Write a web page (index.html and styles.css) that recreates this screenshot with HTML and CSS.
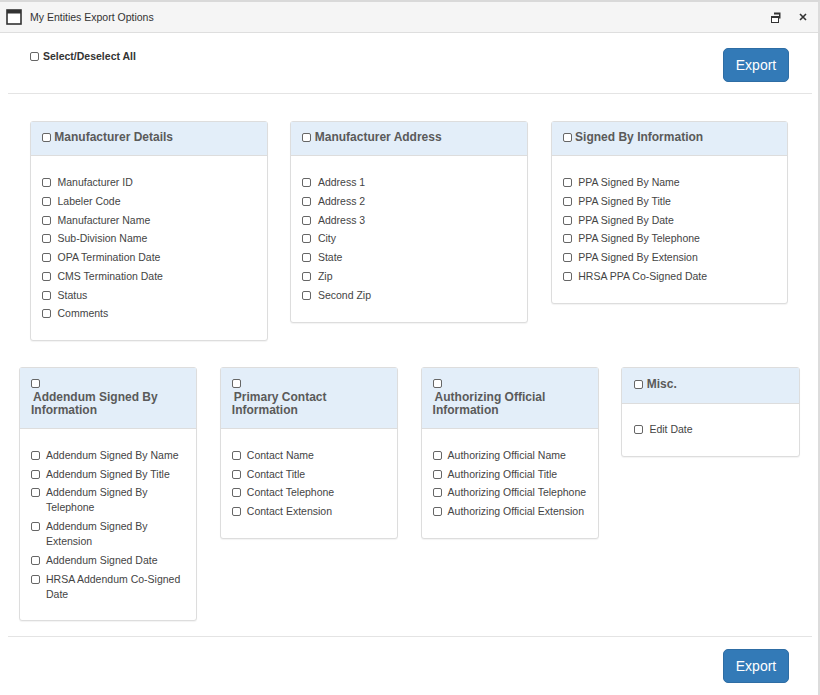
FILE: index.html
```html
<!DOCTYPE html>
<html lang="en">
<head>
<meta charset="utf-8">
<title>My Entities Export Options</title>
<link rel="stylesheet" href="styles.css">
</head>
<body>
<div class="window">
  <header class="titlebar">
    <svg class="win-icon" width="16" height="16" viewBox="0 0 16 16"><rect x="1" y="1" width="14" height="14" fill="#fff" stroke="#333" stroke-width="1.6"/><rect x="1" y="1" width="14" height="3.5" fill="#333"/></svg>
    <span class="title">My Entities Export Options</span>
    <svg class="restore" width="10" height="11" viewBox="0 0 10 11"><path d="M3 0.5h6.5v6h-1.5V2.5H3z" fill="#333"/><rect x="0.5" y="4.5" width="7" height="6" fill="#fff" stroke="#333"/><rect x="0" y="4" width="8" height="2" fill="#333"/></svg>
    <svg class="close" width="8" height="8" viewBox="0 0 8 8"><path d="M1 1l6 6M7 1l-6 6" stroke="#333" stroke-width="1.6" fill="none"/></svg>
  </header>
  <main class="content">
    <div class="toolbar">
      <label class="select-all"><input type="checkbox" class="cb"> Select/Deselect All</label>
      <button class="btn">Export</button>
    </div>
    <hr class="rule">
    <div class="row row-top">
      <section class="panel">
        <h3 class="panel-head"><input type="checkbox" class="cb"> Manufacturer Details</h3>
        <ul class="panel-body">
          <li><input type="checkbox" class="cb"><span>Manufacturer ID</span></li>
          <li><input type="checkbox" class="cb"><span>Labeler Code</span></li>
          <li><input type="checkbox" class="cb"><span>Manufacturer Name</span></li>
          <li><input type="checkbox" class="cb"><span>Sub-Division Name</span></li>
          <li><input type="checkbox" class="cb"><span>OPA Termination Date</span></li>
          <li><input type="checkbox" class="cb"><span>CMS Termination Date</span></li>
          <li><input type="checkbox" class="cb"><span>Status</span></li>
          <li><input type="checkbox" class="cb"><span>Comments</span></li>
        </ul>
      </section>
      <section class="panel">
        <h3 class="panel-head"><input type="checkbox" class="cb"> Manufacturer Address</h3>
        <ul class="panel-body">
          <li><input type="checkbox" class="cb"><span>Address 1</span></li>
          <li><input type="checkbox" class="cb"><span>Address 2</span></li>
          <li><input type="checkbox" class="cb"><span>Address 3</span></li>
          <li><input type="checkbox" class="cb"><span>City</span></li>
          <li><input type="checkbox" class="cb"><span>State</span></li>
          <li><input type="checkbox" class="cb"><span>Zip</span></li>
          <li><input type="checkbox" class="cb"><span>Second Zip</span></li>
        </ul>
      </section>
      <section class="panel">
        <h3 class="panel-head"><input type="checkbox" class="cb"> Signed By Information</h3>
        <ul class="panel-body">
          <li><input type="checkbox" class="cb"><span>PPA Signed By Name</span></li>
          <li><input type="checkbox" class="cb"><span>PPA Signed By Title</span></li>
          <li><input type="checkbox" class="cb"><span>PPA Signed By Date</span></li>
          <li><input type="checkbox" class="cb"><span>PPA Signed By Telephone</span></li>
          <li><input type="checkbox" class="cb"><span>PPA Signed By Extension</span></li>
          <li><input type="checkbox" class="cb"><span>HRSA PPA Co-Signed Date</span></li>
        </ul>
      </section>
    </div>
    <div class="row row-bottom">
      <section class="panel">
        <h3 class="panel-head"><input type="checkbox" class="cb cb-block"><span class="indent">Addendum Signed By</span> Information</h3>
        <ul class="panel-body">
          <li><input type="checkbox" class="cb"><span>Addendum Signed By Name</span></li>
          <li><input type="checkbox" class="cb"><span>Addendum Signed By Title</span></li>
          <li><input type="checkbox" class="cb"><span>Addendum Signed By Telephone</span></li>
          <li><input type="checkbox" class="cb"><span>Addendum Signed By Extension</span></li>
          <li><input type="checkbox" class="cb"><span>Addendum Signed Date</span></li>
          <li><input type="checkbox" class="cb"><span>HRSA Addendum Co-Signed Date</span></li>
        </ul>
      </section>
      <section class="panel">
        <h3 class="panel-head"><input type="checkbox" class="cb cb-block"><span class="indent">Primary Contact</span> Information</h3>
        <ul class="panel-body">
          <li><input type="checkbox" class="cb"><span>Contact Name</span></li>
          <li><input type="checkbox" class="cb"><span>Contact Title</span></li>
          <li><input type="checkbox" class="cb"><span>Contact Telephone</span></li>
          <li><input type="checkbox" class="cb"><span>Contact Extension</span></li>
        </ul>
      </section>
      <section class="panel">
        <h3 class="panel-head"><input type="checkbox" class="cb cb-block"><span class="indent">Authorizing Official</span> Information</h3>
        <ul class="panel-body">
          <li><input type="checkbox" class="cb"><span>Authorizing Official Name</span></li>
          <li><input type="checkbox" class="cb"><span>Authorizing Official Title</span></li>
          <li><input type="checkbox" class="cb"><span>Authorizing Official Telephone</span></li>
          <li><input type="checkbox" class="cb"><span>Authorizing Official Extension</span></li>
        </ul>
      </section>
      <section class="panel panel-misc">
        <h3 class="panel-head"><input type="checkbox" class="cb"> Misc.</h3>
        <ul class="panel-body">
          <li><input type="checkbox" class="cb"><span>Edit Date</span></li>
        </ul>
      </section>
    </div>
    <hr class="rule rule-foot">
    <div class="footer"><button class="btn">Export</button></div>
  </main>
</div>
</body>
</html>
```
FILE: styles.css
```css
* { box-sizing: border-box; }
html, body { margin: 0; height: 100%; background: #fff; overflow: hidden; }
body { font-family: "Liberation Sans", Arial, sans-serif; color: #333; font-size: 12px; }
.window { height: 695px; border-top: 2px solid #d9d9d9; border-right: 2px solid #dcdcdc; display: flex; flex-direction: column; }
.titlebar { height: 31px; flex: none; display: flex; align-items: center; background: #f5f5f5; border-bottom: 1px solid #dedede; padding: 0 11px 0 6px; }
.win-icon { flex: none; }
.title { margin-left: 8px; font-size: 10.5px; color: #333; flex: 1; }
.restore { margin-right: 18px; }
.content { padding: 0 6px 0 8px; flex: 1; }
.toolbar { display: flex; justify-content: space-between; align-items: flex-start; padding: 15px 23px 0 22px; height: 60px; }
.select-all { font-weight: 700; font-size: 10.5px; line-height: 16px; }
.cb { appearance: none; -webkit-appearance: none; display: inline-block; width: 9px; height: 9px; margin: 0; vertical-align: -1px; background: #fff; border: 1px solid #666; border-radius: 2px; }
.select-all .cb { margin-right: 1px; }
.btn { background: #337ab7; border: 1px solid #2e6da4; border-radius: 5px; color: #fff; font: 14px "Liberation Sans", Arial, sans-serif; width: 66px; height: 34px; padding: 0; }
.rule { border: 0; border-top: 1px solid #e4e4e4; margin: 0; }
.row { display: flex; align-items: flex-start; }
.row-top { padding: 27px 24px 0 22px; gap: 22.4px; }
.row-top .panel { flex: 0 0 238px; }
.row-top .panel:last-child { flex: 1 1 0; }
.row-bottom { padding: 26px 12px 0 11px; gap: 22.8px; }
.row-bottom .panel { flex: 0 0 178px; }
.row-bottom .panel:last-child { flex: 1 1 0; }
.panel { min-width: 0; background: #fff; border: 1px solid #ddd; border-radius: 3px; box-shadow: 0 1px 1px rgba(0,0,0,.05); }
.panel-head { margin: 0; background: #e3eef9; border-bottom: 1px solid #ddd; padding: 9px 11px 11px; font-size: 12px; line-height: 13px; font-weight: 700; color: #5a5a5a; }
.row-bottom .panel-head { padding-top: 10px; }
.row-bottom .panel-misc .panel-head { padding: 10px 11px 12px 12px; }
.panel-head .cb { vertical-align: -1px; }
.panel-head .cb-block { display: block; margin: 1px 0 3px; }
.indent { display: block; padding-left: 2px; }
.panel-body { list-style: none; margin: 0; padding: 19px 11px 19px; font-size: 10.5px; color: #444; }
.row-bottom .panel-body { padding-top: 18.6px; padding-bottom: 18.9px; }
.row-bottom .panel-misc .panel-body { padding: 18px 11px 19px 12px; }
.panel-body li { display: flex; align-items: flex-start; line-height: 15px; margin-bottom: 3.75px; }
.panel-body li:last-child { margin-bottom: 0; }
.panel-body .cb { flex: none; margin: 3px 6px 0 0; }
.row-top .panel-body .cb { margin-right: 6.5px; }
.rule-foot { margin-top: 14.5px; }
.footer { display: flex; justify-content: flex-end; padding: 11.6px 23px 0 0; }
```
